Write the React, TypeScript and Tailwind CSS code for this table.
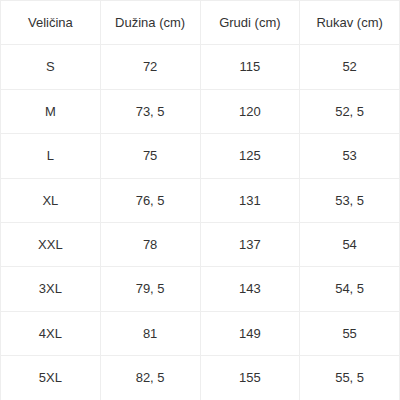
const headers = ['Veličina', 'Dužina (cm)', 'Grudi (cm)', 'Rukav (cm)']

const rows = [
  ['S', '72', '115', '52'],
  ['M', '73, 5', '120', '52, 5'],
  ['L', '75', '125', '53'],
  ['XL', '76, 5', '131', '53, 5'],
  ['XXL', '78', '137', '54'],
  ['3XL', '79, 5', '143', '54, 5'],
  ['4XL', '81', '149', '55'],
  ['5XL', '82, 5', '155', '55, 5'],
]

export default function App() {
  return (
    <div className="h-[400px] w-[400px] bg-white font-['Liberation_Sans',Arial,sans-serif] text-[13px] text-[#333333]">
      <table className="h-full w-full table-fixed border-collapse">
        <thead>
          <tr className="h-[44.4px]">
            {headers.map((h) => (
              <th key={h} className="border border-[#eeeeee] text-center font-normal">
                {h}
              </th>
            ))}
          </tr>
        </thead>
        <tbody>
          {rows.map((row) => (
            <tr key={row[0]} className="h-[44.4px]">
              {row.map((cell, i) => (
                <td key={i} className="border border-[#eeeeee] text-center">
                  {cell}
                </td>
              ))}
            </tr>
          ))}
        </tbody>
      </table>
    </div>
  )
}
